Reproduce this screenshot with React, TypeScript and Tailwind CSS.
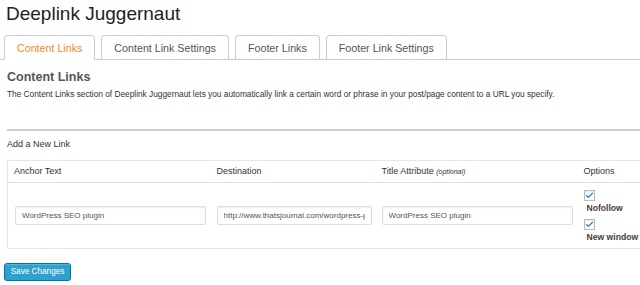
import { Check } from 'lucide-react';

const tabs = ['Content Links', 'Content Link Settings', 'Footer Links', 'Footer Link Settings'];

function Tab({ label, active }: { label: string; active?: boolean }) {
  return (
    <div
      className={`h-[24px] px-[12px] text-[10.7px] leading-[24px] border border-[#ccc] rounded-t-[4px] bg-white whitespace-nowrap ${
        active ? 'text-[#f38b1f] border-b-white -mb-px h-[25px]' : 'text-[#555] border-b-0'
      }`}
    >
      {label}
    </div>
  );
}

function CheckOption({ label }: { label: string }) {
  return (
    <div>
      <div className="w-[11px] h-[11px] border border-[#bbb] bg-white flex items-center justify-center shadow-[inset_0_1px_2px_rgba(0,0,0,0.1)]">
        <Check size={9} strokeWidth={3.5} className="text-[#1e8cbe]" />
      </div>
      <div className="mt-[2px] ml-[3px] text-[8.6px] leading-[10px] font-bold text-[#4a3b3b] whitespace-nowrap">{label}</div>
    </div>
  );
}

const inputCls =
  'h-[19px] border border-[#ddd] rounded-[2px] px-[6px] text-[8px] text-[#555] shadow-[inset_0_1px_2px_rgba(0,0,0,0.07)] outline-none';

export default function App() {
  return (
    <div className="w-[640px] h-[285px] overflow-hidden bg-white font-['Liberation_Sans',Arial,sans-serif]">
      <h1 className="pl-[6px] pt-[2px] text-[19px] leading-[24px] text-[#222]">Deeplink Juggernaut</h1>

      {/* Tabs */}
      <div className="mt-[9px] flex items-end gap-[6px] pl-[4px] border-b border-[#ccc] h-[25px]">
        {tabs.map((t, i) => (
          <Tab key={t} label={t} active={i === 0} />
        ))}
      </div>

      <div className="pl-[7px] w-[700px]">
        <h2 className="mt-[9px] text-[12.5px] leading-[16px] font-bold text-[#555]">Content Links</h2>
        <p className="mt-[3px] text-[8.3px] leading-[12px] text-[#333]">
          The Content Links section of Deeplink Juggernaut lets you automatically link a certain word or phrase in your
          post/page content to a URL you specify.
        </p>

        <div className="mt-[29px] border-t-2 border-[#ccc]" />

        <div className="mt-[7px] text-[9px] leading-[12px] text-[#333]">Add a New Link</div>

        {/* Link table */}
        <table className="mt-[10px] border border-[#e5e5e5] border-collapse text-[9px] text-[#333] table-fixed w-[660px]">
          <thead>
            <tr className="h-[22px] border-b border-[#e1e1e1]">
              <th className="w-[202px] pl-[6px] text-left font-normal">Anchor Text</th>
              <th className="w-[165px] pl-[7px] text-left font-normal">Destination</th>
              <th className="w-[202px] pl-[7px] text-left font-normal">
                Title Attribute <span className="italic text-[7px]">(optional)</span>
              </th>
              <th className="pl-[7px] text-left font-normal">Options</th>
            </tr>
          </thead>
          <tbody>
            <tr className="h-[66px]">
              <td className="pl-[7px] align-middle">
                <input readOnly value="WordPress SEO plugin" className={`w-[191px] ${inputCls}`} />
              </td>
              <td className="pl-[7px] align-middle">
                <input
                  readOnly
                  value="http://www.thatsjournal.com/wordpress-plugin"
                  className={`w-[155px] ${inputCls}`}
                />
              </td>
              <td className="pl-[7px] align-middle">
                <input readOnly value="WordPress SEO plugin" className={`w-[191px] ${inputCls}`} />
              </td>
              <td className="pl-[7px] align-middle">
                <div className="flex flex-col gap-[6px]">
                  <CheckOption label="Nofollow" />
                  <CheckOption label="New window" />
                </div>
              </td>
            </tr>
          </tbody>
        </table>
      </div>

      <button className="ml-[4px] mt-[14px] w-[67px] h-[18px] rounded-[3px] border border-[#0074a2] bg-[#2ea2cc] text-white text-[8.2px] leading-[16px] whitespace-nowrap shadow-[inset_0_1px_0_rgba(120,200,230,0.5)]">
        Save Changes
      </button>
    </div>
  );
}
